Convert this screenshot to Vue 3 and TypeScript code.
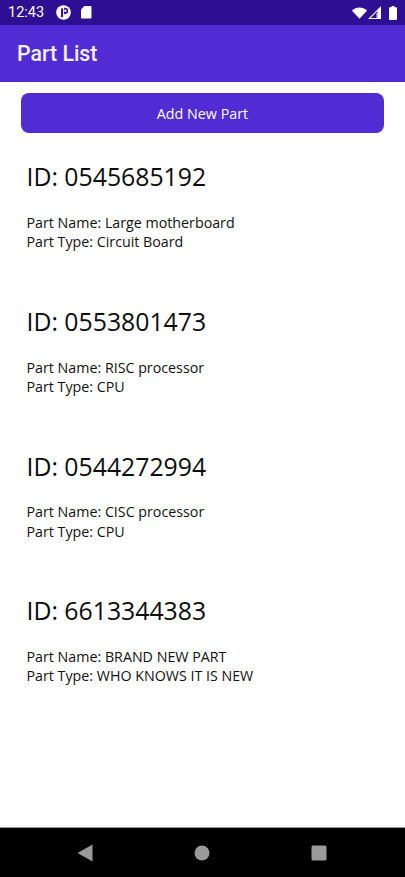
<script setup lang="ts">
interface Part { id: string; name: string; type: string }
const parts: Part[] = [
  { id: '0545685192', name: 'Large motherboard', type: 'Circuit Board' },
  { id: '0553801473', name: 'RISC processor', type: 'CPU' },
  { id: '0544272994', name: 'CISC processor', type: 'CPU' },
  { id: '6613344383', name: 'BRAND NEW PART', type: 'WHO KNOWS IT IS NEW' },
]
</script>

<template>
  <div class="screen">
    <header class="status">
      <span class="time">12:43</span>
      <svg class="ic-p" viewBox="0 0 16 16" width="15" height="15">
        <circle cx="8" cy="8" r="7.800" fill="#fff" />
        <path d="M5.400 3.600h2.200v9.400H5.400z" fill="#2e0e93" />
        <path d="M8.600 2.800h1a3.400 3.400 0 0 1 0 6.800h-1z" fill="#2e0e93" />
        <circle cx="10" cy="6.200" r="1.300" fill="#fff" />
      </svg>
      <svg class="ic-sd" viewBox="0 0 11 13" width="10.500" height="12.500">
        <path d="M3.500 0H10a1 1 0 0 1 1 1v11a1 1 0 0 1-1 1H1a1 1 0 0 1-1-1V3.500z" fill="#fff" />
      </svg>
      <span class="spacer"></span>
      <svg viewBox="0 0 16 12" width="15" height="12" class="ic-wifi">
        <path d="M0 3.600C2.200 1.400 5 .2 8 .2s5.800 1.200 8 3.400L8 12z" fill="#fff" />
      </svg>
      <svg viewBox="0 0 13 13" width="13" height="13" class="ic-sig">
        <path d="M0 13 13 0v13zM2.700 11.900h6.800V5.100z" fill="#fff" fill-rule="evenodd" />
        <path d="M8 7h2v5H8z" fill="#fff" opacity=".45" />
      </svg>
      <svg viewBox="0 0 8 14" width="8" height="14" class="ic-bat">
        <path d="M2.500 0h3v1.300H7a1 1 0 0 1 1 1V13a1 1 0 0 1-1 1H1a1 1 0 0 1-1-1V2.300a1 1 0 0 1 1-1h1.500z" fill="#fff" />
      </svg>
    </header>

    <div class="appbar">Part List</div>

    <main class="content">
      <button class="add" type="button">Add New Part</button>
      <ul class="list">
        <li v-for="p in parts" :key="p.id" class="item">
          <h2 class="pid">ID: {{ p.id }}</h2>
          <p class="line first">Part Name: {{ p.name }}</p>
          <p class="line">Part Type: {{ p.type }}</p>
        </li>
      </ul>
    </main>

    <nav class="nav">
      <svg viewBox="0 0 16 18" width="16" height="18"><path d="M15.500 0.500V17.500L0.500 9z" fill="#9a9a9a" /></svg>
      <svg viewBox="0 0 16 16" width="16" height="16"><circle cx="8" cy="8" r="7.500" fill="#9a9a9a" /></svg>
      <svg viewBox="0 0 16 16" width="16" height="16"><rect x="0.500" y="0.500" width="15" height="15" rx="1.500" fill="#9a9a9a" /></svg>
    </nav>
  </div>
</template>

<style scoped>
.screen {
  width: 405px;
  height: 877px;
  display: flex;
  flex-direction: column;
  background: #fff;
  overflow: hidden;
  font-family: "Open Sans", sans-serif;
  color: #111;
}
.status {
  height: 25px;
  flex: none;
  background: #2e0e93;
  display: flex;
  align-items: center;
  padding: 0 8px 0 8px;
  color: #fff;
}
.time {
  font-family: Roboto, sans-serif;
  font-size: 14.500px;
  width: 47.500px;
}
.ic-p { margin-right: 10.500px; }
.spacer { flex: 1; }
.ic-wifi { margin-right: 1px; }
.ic-sig { margin-right: 8px; }
.appbar {
  height: 57px;
  flex: none;
  background: #512bd4;
  color: #f2f0fb;
  font-family: Roboto, sans-serif;
  font-weight: 500;
  font-size: 21.300px;
  display: flex;
  align-items: center;
  padding-left: 17px;
}
.content {
  flex: 1;
  padding: 11px 21px 0;
}
.add {
  display: block;
  width: 100%;
  height: 40px;
  border: 0;
  border-radius: 8px;
  background: #512bd4;
  color: #fff;
  font-family: "Open Sans", sans-serif;
  font-size: 14.300px;
}
.list {
  list-style: none;
  margin: 0;
  padding: 0 6px 0 5.500px;
}
.item {
  height: 144.670px;
  padding-top: 25.200px;
  box-sizing: border-box;
}
.pid {
  margin: 0 0 18.800px;
  font-size: 24.800px;
  font-weight: 400;
  line-height: 36px;
  color: #0c0c0c;
}
.line {
  margin: 0;
  font-size: 14.250px;
  line-height: 19.500px;
}
.nav {
  height: 50px;
  flex: none;
  background: #000;
  border-top: 1px solid #999;
  box-sizing: border-box;
  display: flex;
  align-items: center;
  justify-content: space-between;
  padding: 0 78px 0 77px;
}
</style>
